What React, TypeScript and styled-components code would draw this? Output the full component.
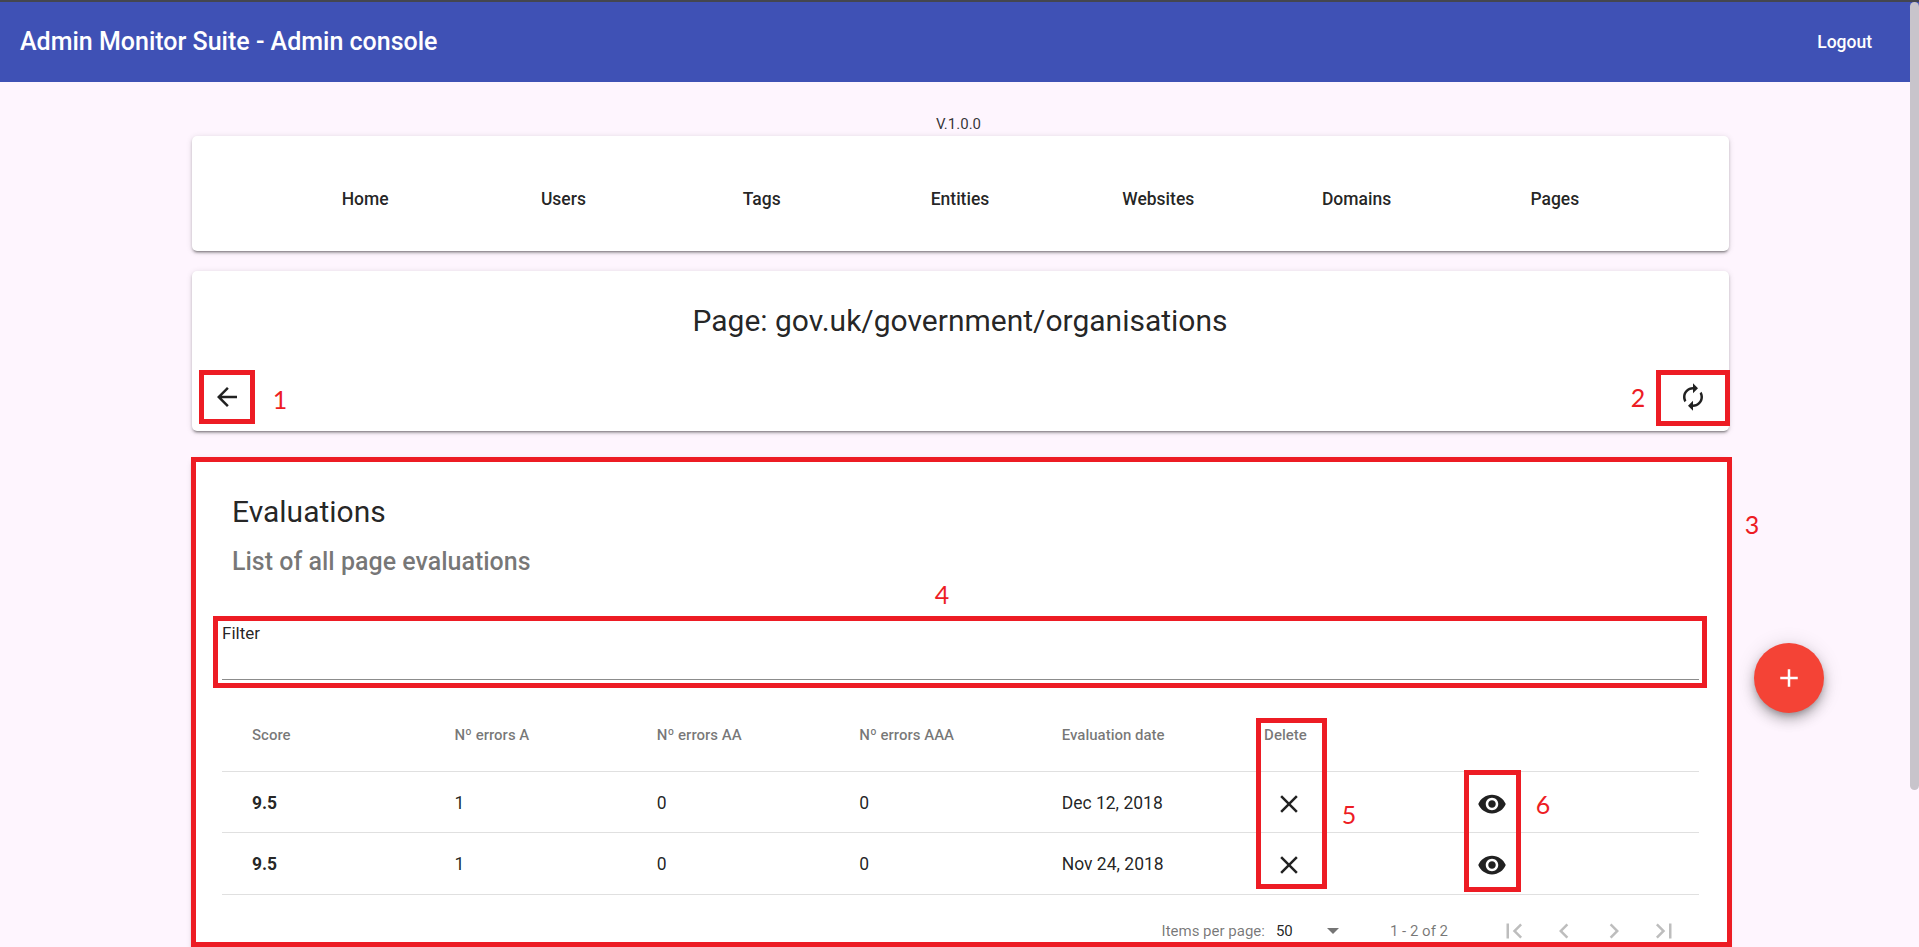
import React from "react";
import styled, { createGlobalStyle } from "styled-components";

const Global = createGlobalStyle`
  html, body { margin: 0; padding: 0; height: 100%; overflow: hidden; }
  body { background: #fef5fe; font-family: Roboto, "Liberation Sans", sans-serif; color: rgba(0,0,0,.87); }
  * { box-sizing: border-box; }
`;

const Page = styled.div`
  position: relative;
  width: 1919px;
  height: 947px;
  overflow: hidden;
`;

const Toolbar = styled.header`
  height: 82px;
  background: #3f51b5;
  border-top: 2px solid #44464f;
  color: #fff;
  display: flex;
  align-items: center;
  justify-content: space-between;
  padding: 0 47px 0 20px;
`;

const AppTitle = styled.h1`
  margin: 0;
  font-size: 25px;
  font-weight: 500;
  line-height: 32px;
`;

const LogoutLink = styled.a`
  font-size: 17.5px;
  font-weight: 500;
`;

const Main = styled.main`
  padding: 0 190px 0 192px;
`;

const Version = styled.div`
  height: 54px;
  padding-top: 33px;
  font-size: 15px;
  line-height: 18px;
  text-align: center;
  color: rgba(0,0,0,.8);
  margin-left: -4px;
`;

const Card = styled.section`
  background: #fff;
  border-radius: 5px;
  box-shadow: 0 3px 2px -2px rgba(0,0,0,.3), 0 2px 3px 0 rgba(0,0,0,.2), 0 1px 6px 0 rgba(0,0,0,.12);
`;

const NavCard = styled(Card)`
  height: 115px;
  padding: 0 75px 0 74px;
  display: flex;
  align-items: center;
`;

const NavLink = styled.a`
  flex: 1;
  text-align: center;
  font-size: 17.5px;
  font-weight: 500;
  line-height: 24px;
  margin-top: 11px;
`;

const PageCard = styled(Card)`
  height: 160px;
  margin-top: 20px;
  padding: 0 11px 9px 10px;
  display: flex;
  flex-direction: column;
`;

const PageTitle = styled.h2`
  margin: 0;
  flex: 1;
  text-align: center;
  font-size: 30px;
  font-weight: 400;
  line-height: 36px;
  padding-top: 32px;
`;

const PageActions = styled.div`
  display: flex;
  justify-content: space-between;
`;

const IconButton = styled.button`
  width: 50px;
  height: 50px;
  padding: 0;
  border: 0;
  background: none;
  color: rgba(0,0,0,.87);
  display: flex;
  align-items: center;
  justify-content: center;
`;

const Icon = styled.svg`
  width: 30px;
  height: 30px;
  fill: currentColor;
  display: block;
`;

const MirrorIcon = styled(Icon)`
  transform: scaleX(-1);
`;

const EvalCard = styled(Card)`
  position: relative;
  margin-top: 28px;
  height: 600px;
  padding: 0 30px;
`;

const EvalTitle = styled.h3`
  margin: 0;
  padding: 35px 0 0 10px;
  font-size: 30px;
  font-weight: 400;
  line-height: 36px;
`;

const EvalSubtitle = styled.h4`
  margin: 0;
  padding: 17px 0 0 10px;
  font-size: 25px;
  font-weight: 500;
  line-height: 30px;
  color: rgba(0,0,0,.54);
`;

const FilterField = styled.div`
  margin-top: 42px;
  height: 61px;
  border-bottom: 1px solid #8c8c8c;
  font-size: 17px;
  line-height: 20px;
  padding-top: 4px;
`;

const TableRow = styled.div<{ $height: number; $top: number }>`
  height: ${p => p.$height}px;
  display: flex;
  align-items: center;
  padding: ${p => p.$top}px 30px 0;
  border-bottom: 1px solid #e0e0e0;
`;

const HeadCell = styled.div`
  flex: 1 1 0;
  font-size: 15px;
  font-weight: 500;
  color: rgba(0,0,0,.54);
`;

const Cell = styled.div<{ $strong?: boolean }>`
  flex: 1 1 0;
  font-size: 17.5px;
  font-weight: ${p => (p.$strong ? 700 : 400)};
`;

const IconCell = styled(Cell)`
  padding-top: 2px;
`;

const Paginator = styled.div`
  display: flex;
  align-items: center;
  height: 56px;
  padding: 16px 10px 0 0;
  justify-content: flex-end;
  font-size: 15px;
  color: rgba(0,0,0,.54);
`;

const PageSizeLabel = styled.span`
  margin-right: 11px;
`;

const PageSizeValue = styled.span`
  width: 51px;
  font-size: 15px;
  color: rgba(0,0,0,.87);
`;

const Caret = styled.span`
  width: 0;
  height: 0;
  border-left: 6px solid transparent;
  border-right: 6px solid transparent;
  border-top: 6px solid rgba(0,0,0,.54);
`;

const RangeLabel = styled.span`
  margin: 0 41px 0 51px;
`;

const PagerButton = styled(IconButton)`
  color: rgba(0,0,0,.26);
`;

const Fab = styled.button`
  position: absolute;
  left: 1754px;
  top: 643px;
  width: 70px;
  height: 70px;
  padding: 0;
  border: 0;
  border-radius: 50%;
  background: #f44336;
  color: #fff;
  display: flex;
  align-items: center;
  justify-content: center;
  box-shadow: 0 4px 6px -2px rgba(0,0,0,.25), 0 7px 12px 1px rgba(0,0,0,.18), 0 2px 20px 1px rgba(0,0,0,.12);
`;

const ScrollThumb = styled.div`
  position: absolute;
  right: 0;
  top: 2px;
  width: 9px;
  height: 788px;
  border-radius: 5px;
  background: #c8c4cb;
`;

const RedBox = styled.div<{ $x: number; $y: number; $w: number; $h: number }>`
  position: absolute;
  left: ${p => p.$x}px;
  top: ${p => p.$y}px;
  width: ${p => p.$w}px;
  height: ${p => p.$h}px;
  border: 5px solid #ed1c24;
  pointer-events: none;
`;

const Marker = styled.span<{ $x: number; $y: number }>`
  position: absolute;
  left: ${p => p.$x}px;
  top: ${p => p.$y}px;
  transform: translate(-50%, -50%);
  font-family: Lato, "Open Sans", sans-serif;
  font-size: 25px;
  line-height: 30px;
  color: #ed1c24;
`;

const paths = {
  back: "M20 11H7.83l5.59-5.59L12 4l-8 8 8 8 1.41-1.41L7.83 13H20v-2z",
  sync: "M12 4V1L8 5l4 4V6c3.31 0 6 2.69 6 6 0 1.01-.25 1.97-.7 2.8l1.46 1.46C19.54 15.03 20 13.57 20 12c0-4.42-3.58-8-8-8zm0 14c-3.31 0-6-2.69-6-6 0-1.01.25-1.97.7-2.8L5.24 7.74C4.46 8.97 4 10.43 4 12c0 4.42 3.58 8 8 8v3l4-4-4-4v3z",
  close: "M19 6.41L17.59 5 12 10.59 6.41 5 5 6.41 10.59 12 5 17.59 6.41 19 12 13.41 17.59 19 19 17.59 13.41 12z",
  eye: "M12 4.5C7 4.5 2.73 7.61 1 12c1.73 4.39 6 7.5 11 7.5s9.27-3.11 11-7.5c-1.73-4.39-6-7.5-11-7.5zM12 17c-2.76 0-5-2.24-5-5s2.24-5 5-5 5 2.24 5 5-2.24 5-5 5zm0-8c-1.66 0-3 1.34-3 3s1.34 3 3 3 3-1.34 3-3-1.34-3-3-3z",
  first: "M18.41 16.59L13.82 12l4.59-4.59L17 6l-6 6 6 6zM6 6h2v12H6z",
  prev: "M15.41 7.41L14 6l-6 6 6 6 1.41-1.41L10.83 12z",
  next: "M10 6L8.59 7.41 13.17 12l-4.58 4.59L10 18l6-6z",
  last: "M5.59 7.41L10.18 12l-4.59 4.59L7 18l6-6-6-6zM16 6h2v12h-2z",
  add: "M19 13h-6v6h-2v-6H5v-2h6V5h2v6h6v2z",
};

const Glyph = ({ d }: { d: string }) => (
  <Icon viewBox="0 0 24 24"><path d={d} /></Icon>
);

const nav = ["Home", "Users", "Tags", "Entities", "Websites", "Domains", "Pages"];
const heads = ["Score", "Nº errors A", "Nº errors AA", "Nº errors AAA", "Evaluation date", "Delete", ""];
const rows = [
  { score: "9.5", a: "1", aa: "0", aaa: "0", date: "Dec 12, 2018", height: 61, top: 2 },
  { score: "9.5", a: "1", aa: "0", aaa: "0", date: "Nov 24, 2018", height: 62, top: 0 },
];

export default function App() {
  return (
    <Page>
      <Global />
      <Toolbar>
        <AppTitle>Admin Monitor Suite - Admin console</AppTitle>
        <LogoutLink>Logout</LogoutLink>
      </Toolbar>
      <Main>
        <Version>V.1.0.0</Version>
        <NavCard>
          {nav.map(n => <NavLink key={n}>{n}</NavLink>)}
        </NavCard>
        <PageCard>
          <PageTitle>Page: gov.uk/government/organisations</PageTitle>
          <PageActions>
            <IconButton><Glyph d={paths.back} /></IconButton>
            <IconButton>
              <MirrorIcon viewBox="0 0 24 24"><path d={paths.sync} /></MirrorIcon>
            </IconButton>
          </PageActions>
        </PageCard>
        <EvalCard>
          <EvalTitle>Evaluations</EvalTitle>
          <EvalSubtitle>List of all page evaluations</EvalSubtitle>
          <FilterField>Filter</FilterField>
          <TableRow $height={92} $top={18}>
            {heads.map((h, i) => <HeadCell key={i}>{h}</HeadCell>)}
          </TableRow>
          {rows.map(r => (
            <TableRow $height={r.height} $top={r.top} key={r.date}>
              <Cell $strong>{r.score}</Cell>
              <Cell>{r.a}</Cell>
              <Cell>{r.aa}</Cell>
              <Cell>{r.aaa}</Cell>
              <Cell>{r.date}</Cell>
              <IconCell><IconButton><Glyph d={paths.close} /></IconButton></IconCell>
              <IconCell><IconButton><Glyph d={paths.eye} /></IconButton></IconCell>
            </TableRow>
          ))}
          <Paginator>
            <PageSizeLabel>Items per page:</PageSizeLabel>
            <PageSizeValue>50</PageSizeValue>
            <Caret />
            <RangeLabel>1 - 2 of 2</RangeLabel>
            <PagerButton><Glyph d={paths.first} /></PagerButton>
            <PagerButton><Glyph d={paths.prev} /></PagerButton>
            <PagerButton><Glyph d={paths.next} /></PagerButton>
            <PagerButton><Glyph d={paths.last} /></PagerButton>
          </Paginator>
        </EvalCard>
      </Main>
      <Fab><Glyph d={paths.add} /></Fab>
      <ScrollThumb />
      <RedBox $x={199} $y={370} $w={56} $h={54} />
      <RedBox $x={1656} $y={370} $w={74} $h={56} />
      <RedBox $x={191} $y={457} $w={1541} $h={490} />
      <RedBox $x={213} $y={616} $w={1494} $h={72} />
      <RedBox $x={1256} $y={718} $w={71} $h={171} />
      <RedBox $x={1464} $y={770} $w={57} $h={122} />
      <Marker $x={280} $y={399}>1</Marker>
      <Marker $x={1638} $y={397}>2</Marker>
      <Marker $x={1752} $y={524}>3</Marker>
      <Marker $x={942} $y={594}>4</Marker>
      <Marker $x={1349} $y={814}>5</Marker>
      <Marker $x={1543} $y={804}>6</Marker>
    </Page>
  );
}
